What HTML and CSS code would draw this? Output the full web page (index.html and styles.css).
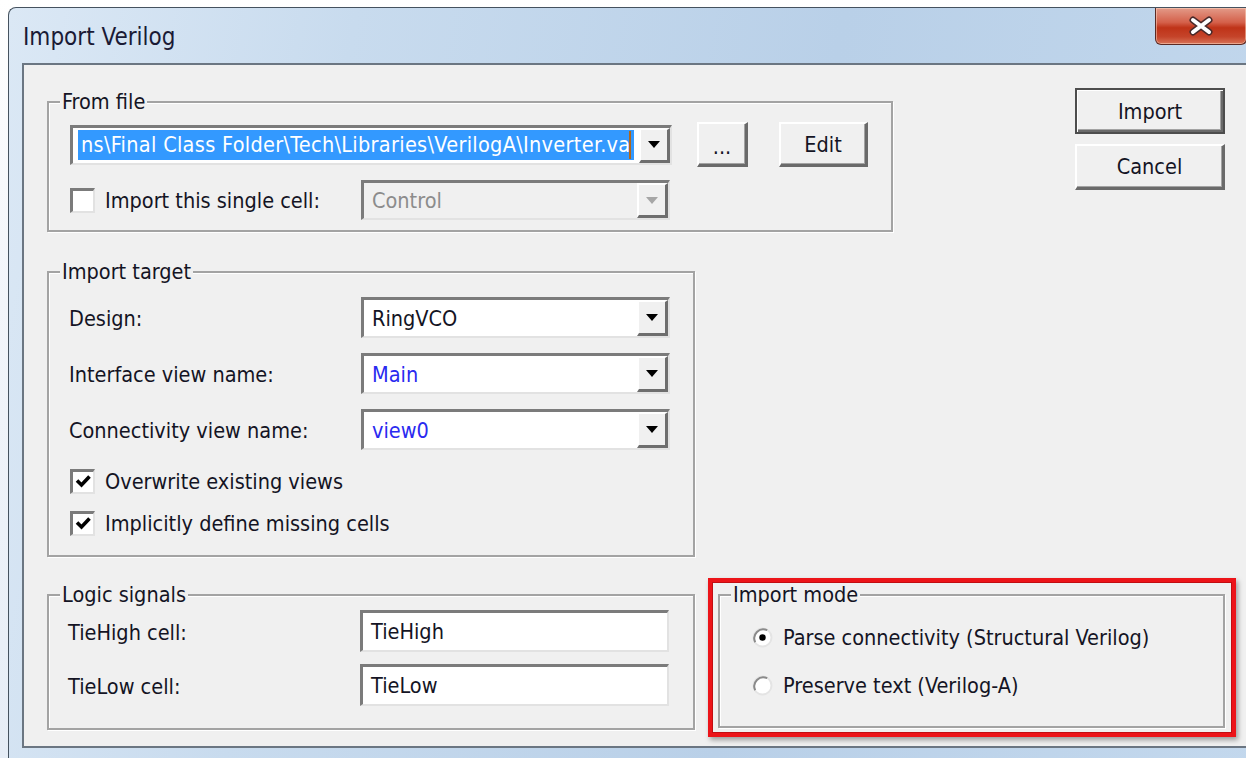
FILE: index.html
```html
<!DOCTYPE html>
<html lang="en">
<head>
<meta charset="utf-8">
<title>Import Verilog</title>
<link rel="stylesheet" href="styles.css">
</head>
<body>
<div class="screen">
  <div class="window">
    <div class="titlebar">
      <span class="title">Import Verilog</span>
      <div class="close">
        <svg width="28" height="20" viewBox="0 0 28 20">
          <path d="M6 4 L22 16 M22 4 L6 16" stroke="#4a2a2a" stroke-width="7" stroke-linecap="round"/>
          <path d="M6 4 L22 16 M22 4 L6 16" stroke="#ffffff" stroke-width="4" stroke-linecap="round"/>
        </svg>
      </div>
    </div>

    <div class="client">
      <div class="row-top">
        <fieldset class="group group-file">
          <legend>From file</legend>
          <div class="body body-file">
            <div class="file-line">
              <div class="combo combo-file">
                <div class="combo-text"><span class="sel">ns\Final Class Folder\Tech\Libraries\VerilogA\Inverter.va</span><span class="caret"></span></div>
                <span class="drop"><svg width="12" height="7" viewBox="0 0 12 7"><path d="M0 0 H12 L6 7 Z" fill="#000"/></svg></span>
              </div>
              <button class="btn btn-browse">...</button>
              <button class="btn btn-edit">Edit</button>
            </div>
            <div class="form-row single-row">
              <label class="check"><span class="box"></span><span>Import this single cell:</span></label>
              <div class="combo combo-field is-disabled">
                <div class="combo-text">Control</div>
                <span class="drop"><svg width="12" height="7" viewBox="0 0 12 7"><path d="M0 0 H12 L6 7 Z" fill="#a6a6a6"/></svg></span>
              </div>
            </div>
          </div>
        </fieldset>
        <div class="actions">
          <button class="btn btn-default">Import</button>
          <button class="btn btn-cancel">Cancel</button>
        </div>
      </div>

      <fieldset class="group group-target">
        <legend>Import target</legend>
        <div class="body body-target">
          <div class="form-grid">
            <span class="lbl">Design:</span>
            <div class="combo combo-field">
              <div class="combo-text">RingVCO</div>
              <span class="drop"><svg width="12" height="7" viewBox="0 0 12 7"><path d="M0 0 H12 L6 7 Z" fill="#000"/></svg></span>
            </div>
            <span class="lbl">Interface view name:</span>
            <div class="combo combo-field">
              <div class="combo-text value-blue">Main</div>
              <span class="drop"><svg width="12" height="7" viewBox="0 0 12 7"><path d="M0 0 H12 L6 7 Z" fill="#000"/></svg></span>
            </div>
            <span class="lbl">Connectivity view name:</span>
            <div class="combo combo-field">
              <div class="combo-text value-blue">view0</div>
              <span class="drop"><svg width="12" height="7" viewBox="0 0 12 7"><path d="M0 0 H12 L6 7 Z" fill="#000"/></svg></span>
            </div>
          </div>
          <div class="checks">
            <label class="check"><span class="box"><svg width="19" height="19" viewBox="0 0 19 19"><path d="M3 8.5 L7.5 13 L15.5 4.5" fill="none" stroke="#000" stroke-width="3.6"/></svg></span><span>Overwrite existing views</span></label>
            <label class="check"><span class="box"><svg width="19" height="19" viewBox="0 0 19 19"><path d="M3 8.5 L7.5 13 L15.5 4.5" fill="none" stroke="#000" stroke-width="3.6"/></svg></span><span>Implicitly define missing cells</span></label>
          </div>
        </div>
      </fieldset>

      <div class="row-bottom">
        <fieldset class="group group-logic">
          <legend>Logic signals</legend>
          <div class="body body-logic">
            <div class="form-grid logic-grid">
              <span class="lbl">TieHigh cell:</span>
              <div class="textfield">TieHigh</div>
              <span class="lbl">TieLow cell:</span>
              <div class="textfield">TieLow</div>
            </div>
          </div>
        </fieldset>

        <div class="mark">
          <fieldset class="group group-mode">
            <legend>Import mode</legend>
            <div class="body body-mode">
              <label class="radio">
                <svg width="21" height="21" viewBox="0 0 21 21">
                  <circle cx="10.5" cy="10.5" r="9" fill="#fff" stroke="#e4e4e4" stroke-width="2"/>
                  <path d="M3.2 15.2 A9 9 0 0 1 15.2 3.2" fill="none" stroke="#8a8a8a" stroke-width="2"/>
                  <circle cx="10.5" cy="10.5" r="3.2" fill="#000"/>
                </svg>
                <span>Parse connectivity (Structural Verilog)</span>
              </label>
              <label class="radio">
                <svg width="21" height="21" viewBox="0 0 21 21">
                  <circle cx="10.5" cy="10.5" r="9" fill="#fff" stroke="#e4e4e4" stroke-width="2"/>
                  <path d="M3.2 15.2 A9 9 0 0 1 15.2 3.2" fill="none" stroke="#8a8a8a" stroke-width="2"/>
                </svg>
                <span>Preserve text (Verilog-A)</span>
              </label>
            </div>
          </fieldset>
        </div>
      </div>
    </div>
  </div>
</div>
</body>
</html>
```

FILE: styles.css
```css
html, body {
  margin: 0;
  padding: 0;
}

body {
  font-family: "DejaVu Sans Condensed", "DejaVu Sans", sans-serif;
  font-stretch: semi-condensed;
  font-size: 21.5px;
  color: #141424;
}

/* desktop behind the dialog */
.screen {
  width: 1246px;
  height: 758px;
  overflow: hidden;
  box-sizing: border-box;
  padding: 7px 0 0 8px;
  background: linear-gradient(to bottom, #ffffff 0%, #f2f5fa 40%, #e6edf6 100%);
}

/* Aero window frame */
.window {
  width: 1262px;
  height: 751px;
  box-sizing: border-box;
  border: 1px solid #45525f;
  border-right: none;
  border-bottom: none;
  border-radius: 8px 0 0 0;
  background: linear-gradient(100deg, #dbe8f5 0%, #c8dbee 25%, #b9d0e8 60%, #c3d8ed 100%);
  display: flex;
  flex-direction: column;
}

.titlebar {
  height: 55px;
  flex: none;
  display: flex;
  justify-content: space-between;
  align-items: flex-start;
  padding-left: 14px;
  box-sizing: border-box;
}

.title {
  font-size: 24px;
  line-height: 26px;
  margin-top: 16px;
  color: #1a1a35;
}

.close {
  width: 92px;
  height: 37px;
  margin-right: 23px;
  box-sizing: border-box;
  border: 1px solid #5c2a24;
  border-top: none;
  border-radius: 0 0 6px 6px;
  background: linear-gradient(to bottom, #e39a88 0%, #d4604a 40%, #bf3318 55%, #c5442a 80%, #d87358 100%);
  box-shadow: inset 0 0 0 1px rgba(255, 220, 200, 0.5);
  display: flex;
  align-items: center;
  justify-content: center;
}

/* dialog client area */
.client {
  margin-left: 13px;
  height: 685px;
  box-sizing: border-box;
  border: 2px solid #6b7682;
  border-right: none;
  background: #f0f0f0;
  padding: 23px 0 0 23px;
}

/* etched group boxes */
.group {
  margin: 0;
  padding: 0;
  border: 2px solid #a3a3a3;
  box-shadow: inset 1px 1px 0 #ffffff, 1px 1px 0 #ffffff;
  box-sizing: border-box;
  min-width: 0;
}

.group legend {
  margin-left: 11px;
  padding: 0 2px;
  line-height: 24px;
  background: #f0f0f0;
}

.row-top {
  display: flex;
  align-items: flex-start;
}

.group-file {
  width: 846px;
  margin-top: 2px;
}

.body-file {
  padding: 8px 0 10px 21px;
}

.file-line {
  display: flex;
  align-items: center;
  height: 45px;
}

/* sunken edit/combo boxes */
.combo, .textfield {
  box-sizing: border-box;
  border-style: solid;
  border-width: 3px 2px 2px 3px;
  border-color: #7b7b7b #e2e2e2 #e2e2e2 #7b7b7b;
  background: #ffffff;
  display: flex;
  align-items: stretch;
}

.combo-file {
  width: 602px;
  height: 40px;
}

.combo-text {
  flex: 1;
  display: flex;
  align-items: center;
  padding-left: 8px;
  overflow: hidden;
  white-space: nowrap;
}

.combo-file .combo-text {
  padding-left: 5px;
}

.sel {
  background: #3399ff;
  color: #ffffff;
  line-height: 30px;
  padding: 0 3px 0 3px;
  letter-spacing: 0.3px;
}

.caret {
  display: inline-block;
  width: 2px;
  height: 28px;
  background: #b0661c;
  margin-left: -5px;
}

.drop {
  width: 31px;
  flex: none;
  box-sizing: border-box;
  border-style: solid;
  border-width: 2px 3px 3px 2px;
  border-color: #ffffff #6e6e6e #6e6e6e #ffffff;
  background: #f0f0f0;
  display: flex;
  align-items: center;
  justify-content: center;
}

.is-disabled {
  background: #f0f0f0;
  color: #8c8c8c;
}

/* raised push buttons */
.btn {
  font: inherit;
  color: inherit;
  margin: 0;
  padding: 0;
  box-sizing: border-box;
  background: #f0f0f0;
  border-style: solid;
  border-width: 2px 3px 3px 2px;
  border-color: #ffffff #6a6a6a #6a6a6a #ffffff;
  box-shadow: inset -1px -1px 0 #a3a3a3;
  display: flex;
  align-items: center;
  justify-content: center;
}

.btn-browse {
  width: 51px;
  height: 45px;
  margin-left: 25px;
  padding-top: 4px;
}

.btn-edit {
  width: 89px;
  height: 45px;
  margin-left: 31px;
}

.form-row {
  display: flex;
  align-items: center;
}

.single-row {
  margin-top: 13px;
  height: 40px;
}

.single-row .check {
  width: 291px;
  flex: none;
}

.combo-field {
  width: 309px;
  height: 41px;
}

.single-row .combo-field {
  height: 40px;
}

/* checkboxes */
.check {
  display: flex;
  align-items: center;
  gap: 10px;
  height: 30px;
}

.box {
  width: 25px;
  height: 25px;
  flex: none;
  box-sizing: border-box;
  border-style: solid;
  border-width: 3px 2px 2px 3px;
  border-color: #7b7b7b #e2e2e2 #e2e2e2 #7b7b7b;
  background: #ffffff;
  display: flex;
  align-items: center;
  justify-content: center;
}

.actions {
  width: 150px;
  margin-left: 182px;
  display: flex;
  flex-direction: column;
  gap: 10px;
}

.actions .btn {
  width: 150px;
  height: 46px;
}

.btn-default {
  border: 2px solid #4d4d4d;
  box-shadow: inset 1px 1px 0 #ffffff, inset -2px -2px 0 #6a6a6a, inset -3px -3px 0 #a3a3a3;
}

/* Import target */
.group-target {
  width: 648px;
  margin-top: 28px;
}

.body-target {
  padding: 13px 0 17px 20px;
}

.form-grid {
  display: grid;
  grid-template-columns: 292px 309px;
  row-gap: 15px;
  align-items: center;
}

.lbl {
  line-height: 24px;
  padding-top: 3px;
}

.value-blue {
  color: #2a2af0;
}

.checks {
  margin-top: 16px;
  padding-left: 1px;
  display: flex;
  flex-direction: column;
  gap: 12px;
}

/* bottom row */
.row-bottom {
  display: flex;
  align-items: flex-start;
  margin-top: 21px;
}

.group-logic {
  width: 648px;
  margin-top: 5px;
}

.body-logic {
  padding: 3px 0 22px 19px;
}

.logic-grid {
  row-gap: 12px;
}

.textfield {
  width: 309px;
  height: 42px;
  align-items: center;
  padding-left: 8px;
}

/* red highlight frame around the mode group */
.mark {
  margin-left: 13px;
  width: 528px;
  height: 159px;
  box-sizing: border-box;
  border: 4px solid #ec1419;
  box-shadow: inset 0 0 0 1px #c20d12, 2px 3px 5px rgba(0, 0, 0, 0.35);
  padding: 1px 7px 0 6px;
}

.group-mode {
  width: 507px;
  height: 145px;
}

.body-mode {
  padding: 15px 0 0 32px;
  display: flex;
  flex-direction: column;
  gap: 18px;
}

.radio {
  display: flex;
  align-items: center;
  gap: 10px;
  height: 30px;
}
```
